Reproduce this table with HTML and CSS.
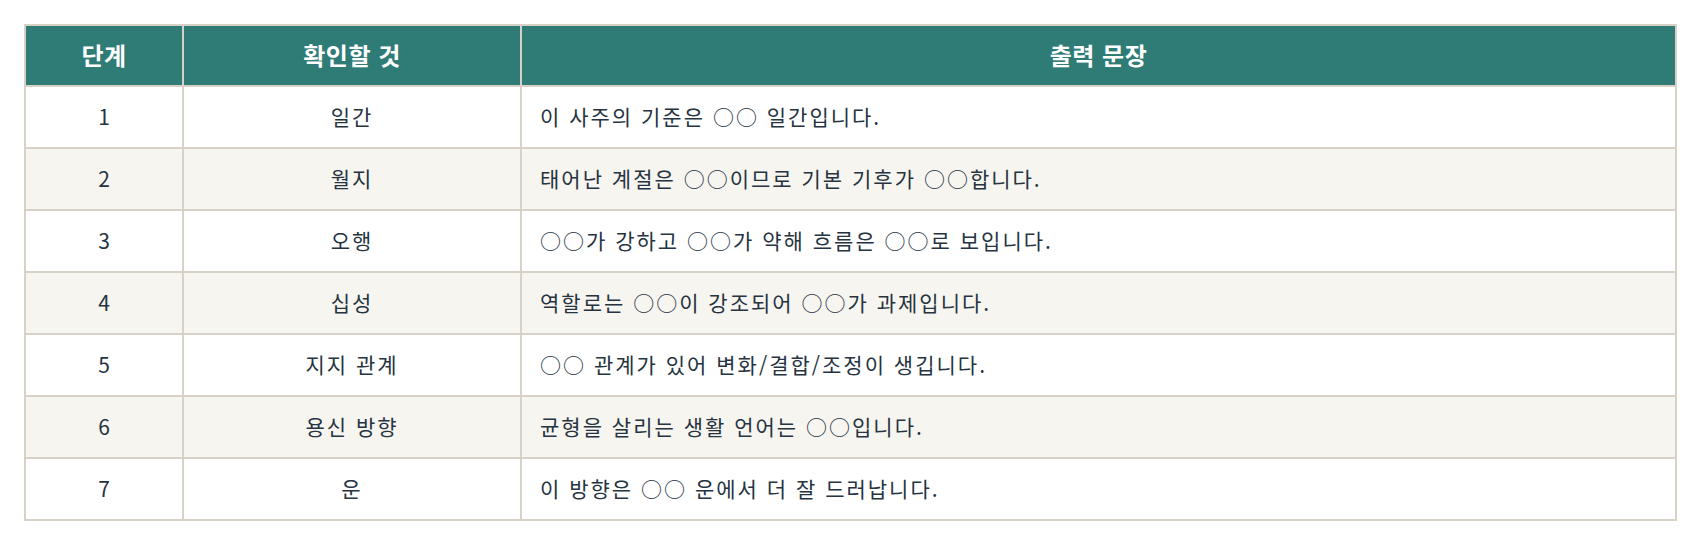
FILE: index.html
```html
<!DOCTYPE html>
<html lang="ko">
<head>
<meta charset="utf-8">
<link rel="stylesheet" href="styles.css">
</head>
<body>
<div class="wrap">
<table class="steps">
  <colgroup>
    <col class="c1"><col class="c2"><col class="c3">
  </colgroup>
  <thead>
    <tr><th>단계</th><th>확인할 것</th><th>출력 문장</th></tr>
  </thead>
  <tbody>
    <tr><td class="num">1</td><td class="what">일간</td><td class="text">이 사주의 기준은 ○○ 일간입니다.</td></tr>
    <tr><td class="num">2</td><td class="what">월지</td><td class="text">태어난 계절은 ○○이므로 기본 기후가 ○○합니다.</td></tr>
    <tr><td class="num">3</td><td class="what">오행</td><td class="text">○○가 강하고 ○○가 약해 흐름은 ○○로 보입니다.</td></tr>
    <tr><td class="num">4</td><td class="what">십성</td><td class="text">역할로는 ○○이 강조되어 ○○가 과제입니다.</td></tr>
    <tr><td class="num">5</td><td class="what">지지 관계</td><td class="text">○○ 관계가 있어 변화/결합/조정이 생깁니다.</td></tr>
    <tr><td class="num">6</td><td class="what">용신 방향</td><td class="text">균형을 살리는 생활 언어는 ○○입니다.</td></tr>
    <tr><td class="num">7</td><td class="what">운</td><td class="text">이 방향은 ○○ 운에서 더 잘 드러납니다.</td></tr>
  </tbody>
</table>
</div>
</body>
</html>
```
FILE: styles.css
```css
html, body {
  margin: 0;
  padding: 0;
  background: #ffffff;
}
.wrap {
  padding: 24px 23px 24px 24px;
}
.steps {
  width: 1653px;
  border-collapse: collapse;
  table-layout: fixed;
  font-family: "Noto Sans CJK KR", "Noto Sans", sans-serif;
  font-size: 21px;
  letter-spacing: 2px;
  color: #263341;
}
.c1 { width: 158px; }
.c2 { width: 338px; }
.c3 { width: auto; }
.steps th,
.steps td {
  border: 2px solid #d8d2c6;
  padding: 0 18px;
  line-height: 1.2;
}
.steps th {
  background: #2f7c77;
  color: #ffffff;
  font-weight: 700;
  font-size: 24px;
  letter-spacing: 0.5px;
  height: 59px;
  text-align: center;
}
.steps td {
  height: 60px;
}
.steps tbody tr:nth-child(even) td {
  background: #f7f5f0;
}
.num, .what {
  text-align: center;
}
.num {
  letter-spacing: 0;
}
.text {
  text-align: left;
}
```
